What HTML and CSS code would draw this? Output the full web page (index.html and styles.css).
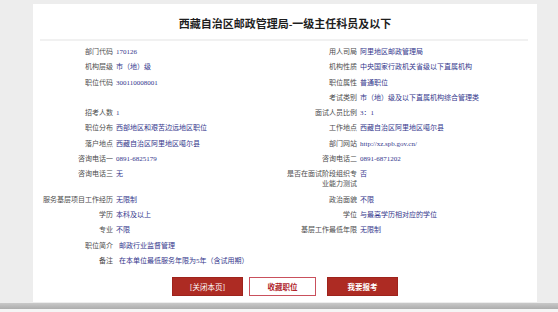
FILE: index.html
```html
<!DOCTYPE html>
<html lang="zh-CN">
  <head>
    <meta charset="UTF-8" />
    <meta name="viewport" content="width=device-width, initial-scale=1.0" />
    <title>职位详情</title>
    <link rel="stylesheet" href="styles.css">
  </head>
  <body>
    <div class="panel">
      <h1 class="title">西藏自治区邮政管理局-一级主任科员及以下</h1>

      <div class="line"></div>

      <div class="info">
        <div class="item"><span class="label">部门代码</span><span class="value">170126</span></div>
        <div class="item"><span class="label">用人司局</span><span class="value">阿里地区邮政管理局</span></div>

        <div class="item"><span class="label">机构层级</span><span class="value">市（地）级</span></div>
        <div class="item"><span class="label">机构性质</span><span class="value">中央国家行政机关省级以下直属机构</span></div>

        <div class="item"><span class="label">职位代码</span><span class="value">300110008001</span></div>
        <div class="item"><span class="label">职位属性</span><span class="value">普通职位</span></div>

        <div class="item"></div>
        <div class="item"><span class="label">考试类别</span><span class="value">市（地）级及以下直属机构综合管理类</span></div>

        <div class="item"><span class="label">招考人数</span><span class="value">1</span></div>
        <div class="item"><span class="label">面试人员比例</span><span class="value">3：1</span></div>

        <div class="item"><span class="label">职位分布</span><span class="value">西部地区和艰苦边远地区职位</span></div>
        <div class="item"><span class="label">工作地点</span><span class="value">西藏自治区阿里地区噶尔县</span></div>

        <div class="item"><span class="label">落户地点</span><span class="value">西藏自治区阿里地区噶尔县</span></div>
        <div class="item"><span class="label">部门网站</span><span class="value">http://xz.spb.gov.cn/</span></div>

        <div class="item"><span class="label">咨询电话一</span><span class="value">0891-6825179</span></div>
        <div class="item"><span class="label">咨询电话二</span><span class="value">0891-6871202</span></div>

        <div class="item"><span class="label">咨询电话三</span><span class="value">无</span></div>
        <div class="item"><span class="label">是否在面试阶段组织专业能力测试</span><span class="value">否</span></div>

        <div class="item"><span class="label">服务基层项目工作经历</span><span class="value">无限制</span></div>
        <div class="item"><span class="label">政治面貌</span><span class="value">不限</span></div>

        <div class="item"><span class="label">学历</span><span class="value">本科及以上</span></div>
        <div class="item"><span class="label">学位</span><span class="value">与最高学历相对应的学位</span></div>

        <div class="item"><span class="label">专业</span><span class="value">不限</span></div>
        <div class="item"><span class="label">基层工作最低年限</span><span class="value">无限制</span></div>

        <div class="item wide"><span class="label">职位简介</span><span class="value">邮政行业监督管理</span></div>

        <div class="item wide"><span class="label">备注</span><span class="value">在本单位最低服务年限为5年（含试用期）</span></div>
      </div>

      <div class="button-container">
        <button class="btn btn-close">[关闭本页]</button>
        <button class="btn btn-save">收藏职位</button>
        <button class="btn btn-apply">我要报考</button>
      </div>
    </div>

    <div class="scrollbar"></div>
  </body>
</html>
```

FILE: styles.css
```css
body {
  font-family: "Liberation Serif", "Noto Sans CJK SC", serif;
  background-color: #ededed;
  margin: 0;
  height: 312px;
  overflow: hidden;
}

.panel {
  width: 504px;
  height: 298px;
  margin: 4px 0 0 33px;
  background-color: #fff;
}

.title {
  margin: 0;
  padding-top: 13px;
  font-size: 11px;
  line-height: 14px;
  font-weight: bold;
  text-align: center;
  color: #1e1e1e;
}

.line {
  height: 2px;
  margin: 8px 9px 0 7px;
  background-color: #f1f1f1;
}

.info {
  display: grid;
  grid-template-columns: 244px 244px;
  row-gap: 5.3px;
  align-items: start;
  margin-top: 6px;
  padding-left: 10px;
  font-size: 7px;
  line-height: 10px;
}

.item {
  display: flex;
  min-height: 10px;
}

.wide {
  grid-column: 1 / 3;
}

.label {
  width: 70px;
  flex-shrink: 0;
  text-align: right;
  color: #4d4d4d;
}

.value {
  margin-left: 3px;
  color: #34378c;
}

.wide .value {
  margin-left: 6px;
}

.button-container {
  display: flex;
  justify-content: center;
  margin-top: 11px;
}

.btn {
  height: 19px;
  padding: 0;
  border: 1px solid #9e231c;
  background-color: #ad2b23;
  color: #fff;
  font-family: "Liberation Serif", "Noto Sans CJK SC", serif;
  font-size: 7.5px;
  cursor: pointer;
}

.btn-close {
  width: 71px;
}

.btn-save {
  width: 67px;
  margin-left: 6px;
  border-color: #c9505c;
  background-color: #fff;
  color: #b0242c;
  font-weight: bold;
}

.btn-apply {
  width: 71px;
  margin-left: 11px;
  font-weight: bold;
}

.scrollbar {
  height: 6px;
  margin-top: 1px;
  background: linear-gradient(#c9c9c9, #adadad);
  border-bottom: 3px solid #f5f5f5;
}
```
